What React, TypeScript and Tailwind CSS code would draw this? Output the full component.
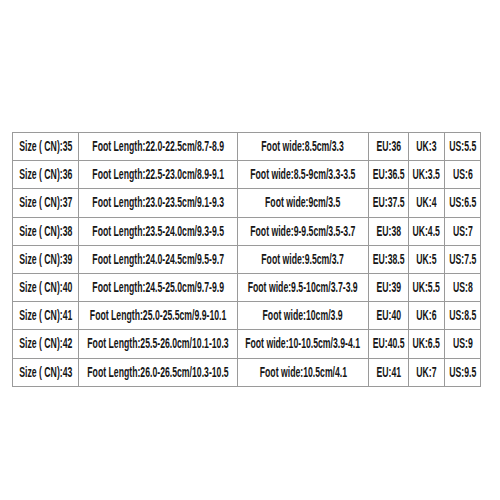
import React from 'react';

const rows: string[][] = [
  ['35', '22.0-22.5cm/8.7-8.9', '8.5cm/3.3', '36', '3', '5.5'],
  ['36', '22.5-23.0cm/8.9-9.1', '8.5-9cm/3.3-3.5', '36.5', '3.5', '6'],
  ['37', '23.0-23.5cm/9.1-9.3', '9cm/3.5', '37.5', '4', '6.5'],
  ['38', '23.5-24.0cm/9.3-9.5', '9-9.5cm/3.5-3.7', '38', '4.5', '7'],
  ['39', '24.0-24.5cm/9.5-9.7', '9.5cm/3.7', '38.5', '5', '7.5'],
  ['40', '24.5-25.0cm/9.7-9.9', '9.5-10cm/3.7-3.9', '39', '5.5', '8'],
  ['41', '25.0-25.5cm/9.9-10.1', '10cm/3.9', '40', '6', '8.5'],
  ['42', '25.5-26.0cm/10.1-10.3', '10-10.5cm/3.9-4.1', '40.5', '6.5', '9'],
  ['43', '26.0-26.5cm/10.3-10.5', '10.5cm/4.1', '41', '7', '9.5'],
];

// narrow, condensed lettering like the source image
const Cell = ({ children }: { children: React.ReactNode }) => (
  <td className="border border-[#9a9a9a] p-0 overflow-visible">
    <div className="flex justify-center">
      <span className="inline-block whitespace-nowrap scale-x-[0.62]">{children}</span>
    </div>
  </td>
);

export default function App() {
  return (
    <div className="w-[500px] h-[500px] bg-white pt-[132px] pl-[12px]">
      <table
        className="w-[468px] border-collapse table-fixed text-[14px] text-[#161616] font-bold"
        style={{ fontFamily: '"Liberation Sans", Arial, sans-serif' }}
      >
        <colgroup>
          <col className="w-[66px]" />
          <col className="w-[159px]" />
          <col className="w-[131px]" />
          <col className="w-[40px]" />
          <col className="w-[36px]" />
          <col className="w-[36px]" />
        </colgroup>
        <tbody>
          {rows.map((r) => (
            <tr key={r[0]} className="h-[28.2px]">
              <Cell>Size ( CN):{r[0]}</Cell>
              <Cell>Foot Length:{r[1]}</Cell>
              <Cell>Foot wide:{r[2]}</Cell>
              <Cell>EU:{r[3]}</Cell>
              <Cell>UK:{r[4]}</Cell>
              <Cell>US:{r[5]}</Cell>
            </tr>
          ))}
        </tbody>
      </table>
    </div>
  );
}
